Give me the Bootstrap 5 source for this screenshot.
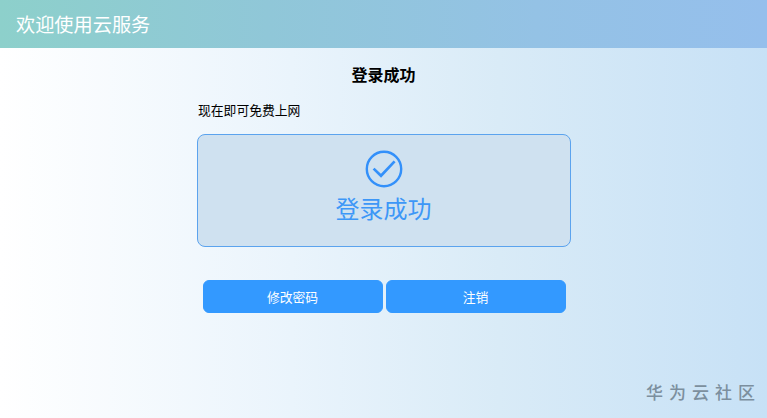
<!doctype html>
<html lang="zh-CN">
  <head>
    <meta charset="utf-8">
    <meta name="viewport" content="width=device-width, initial-scale=1">
    <title>登录成功</title>
    <link href="https://cdn.jsdelivr.net/npm/bootstrap@5.3.3/dist/css/bootstrap.min.css" rel="stylesheet">
    <style>
      body {
        font-family: "Noto Sans CJK SC", sans-serif;
        background: linear-gradient(to right, #ffffff 0%, #eaf4fc 38%, #d9ebf7 65%, #c7e1f6 100%);
        color: #000;
      }
      .top-bar {
        height: 48px;
        padding-top: 2px;
        background: linear-gradient(to right, #8dd0cb, #90c7d8 35%, #94c2e5 70%, #95bfec);
        font-size: 19.2px;
        line-height: 1;
      }
      .panel { width: 374px; }
      .page-title { font-size: 16px; line-height: 24px; margin: 14px 0 14px; }
      .hint { font-size: 12.8px; line-height: 20px; margin: 0 0 14px 1.5px; }
      .result {
        height: 113px;
        padding-top: 15px;
        background: #cfe1f0;
        border: 1px solid #5ba3ee;
        border-radius: 8px;
        color: #3d97f7;
      }
      .result-text { font-size: 24px; line-height: 36px; margin-top: 2px; }
      .actions { gap: 3px; margin: 33px 0 0 1px; }
      .btn-action {
        width: 180px;
        height: 33px;
        padding: 0;
        border-radius: 6px;
        font-size: 12.8px;
        --bs-btn-color: #fff;
        --bs-btn-bg: #3399ff;
        --bs-btn-border-color: #3399ff;
        --bs-btn-hover-color: #fff;
        --bs-btn-hover-bg: #2288ee;
      }
      .community {
        font-size: 17px;
        font-weight: 500;
        line-height: 24px;
        letter-spacing: 6px;
        color: #7c8f9e;
        padding: 0 6px 14px 0;
      }
    </style>
  </head>
  <body class="d-flex flex-column vh-100 overflow-hidden">
    <header class="top-bar d-flex align-items-center px-3 text-white">欢迎使用云服务</header>

    <main class="panel mx-auto flex-grow-1">
      <h1 class="page-title fw-bold text-center">登录成功</h1>
      <p class="hint">现在即可免费上网</p>
      <div class="result d-flex flex-column align-items-center">
        <svg width="38" height="38" viewBox="0 0 38 38" fill="none" stroke="#3390fa" stroke-width="2.4">
          <circle cx="19" cy="19" r="17.2"/>
          <path d="M8.6 18.6L16 25.8L29.6 11.4" stroke-width="2.7"/>
        </svg>
        <div class="result-text">登录成功</div>
      </div>
      <div class="actions d-flex justify-content-center">
        <button type="button" class="btn btn-action">修改密码</button>
        <button type="button" class="btn btn-action">注销</button>
      </div>
    </main>

    <footer class="community text-end">华为云社区</footer>
    <script src="https://cdn.jsdelivr.net/npm/bootstrap@5.3.3/dist/js/bootstrap.bundle.min.js"></script>
  </body>
</html>
